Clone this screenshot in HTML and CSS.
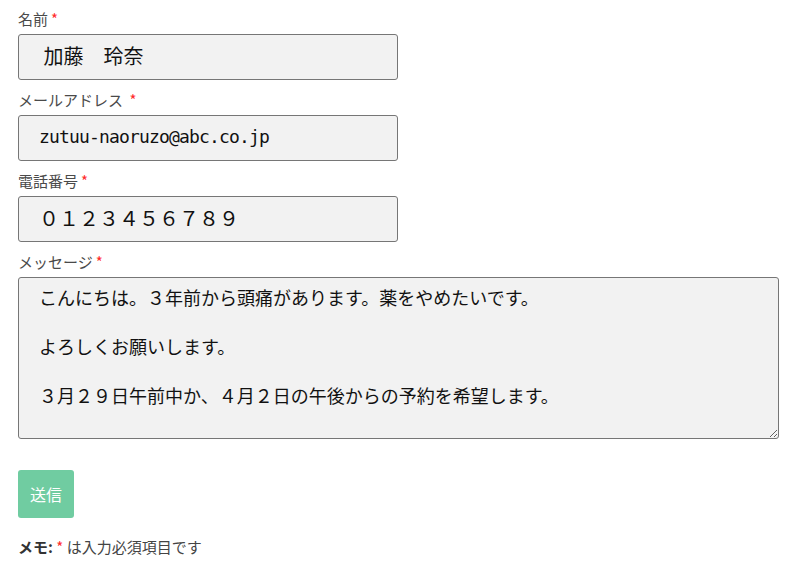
FILE: index.html
```html
<!DOCTYPE html>
<html lang="ja">
<head>
  <meta charset="UTF-8">
  <meta name="viewport" content="width=device-width, initial-scale=1.0">
  <title>お問い合わせ</title>
  <link rel="stylesheet" href="styles.css">
</head>
<body>
  <form class="contact-form">
    <div class="form-group">
      <label for="name">名前<span class="req">*</span></label>
      <input type="text" id="name" class="field" value=" 加藤　玲奈">
    </div>

    <div class="form-group">
      <label for="email">メールアドレス <span class="req">*</span></label>
      <input type="email" id="email" class="field field-mono" value="zutuu-naoruzo@abc.co.jp">
    </div>

    <div class="form-group">
      <label for="tel">電話番号<span class="req">*</span></label>
      <input type="tel" id="tel" class="field" value="０１２３４５６７８９">
    </div>

    <div class="form-group">
      <label for="message">メッセージ<span class="req">*</span></label>
      <textarea id="message" class="field field-area" rows="6">こんにちは。３年前から頭痛があります。薬をやめたいです。

よろしくお願いします。

３月２９日午前中か、４月２日の午後からの予約を希望します。</textarea>
    </div>

    <button type="submit" class="submit">送信</button>

    <p class="memo"><strong>メモ:</strong> <span class="req">*</span> は入力必須項目です</p>
  </form>
</body>
</html>
```

FILE: styles.css
```css
body {
  margin: 8px;
  font-family: "Noto Sans CJK JP", "Noto Sans", sans-serif;
  color: #444;
  background: #fff;
}
.contact-form {
  padding: 0 17px 0 10px;
}
.form-group {
  margin-bottom: 9px;
}
label {
  display: block;
  font-size: 15px;
  line-height: 21px;
  margin-bottom: 5px;
  color: #4a4a4a;
}
.req {
  color: #ff2b2b;
  margin-left: 3px;
}
.field {
  display: block;
  box-sizing: border-box;
  width: 380px;
  height: 46px;
  margin: 0;
  padding: 0 20px 4px 20px;
  border: 1px solid #767676;
  border-radius: 3px;
  background: #f2f2f2;
  color: #111;
  font-family: "Noto Sans CJK JP", sans-serif;
  font-size: 20px;
}
.field-mono {
  font-family: "DejaVu Sans Mono", "Liberation Mono", monospace;
  font-size: 18px;
  letter-spacing: -0.84px;
}
.field-area {
  width: 100%;
  height: 162px;
  padding: 7px 20px;
  font-size: 18px;
  line-height: 24.5px;
  resize: vertical;
}
.submit {
  display: block;
  margin-top: 31px;
  width: 56px;
  height: 48px;
  border: none;
  border-radius: 3px;
  background-color: #70cca1;
  color: #fff;
  font-family: "Noto Sans CJK JP", sans-serif;
  font-size: 16px;
  padding: 0;
}
.memo {
  margin: 18px 0 0;
  font-size: 15px;
  line-height: 22px;
}
.memo strong {
  color: #333;
}
.memo .req {
  margin-left: 0;
}
```
